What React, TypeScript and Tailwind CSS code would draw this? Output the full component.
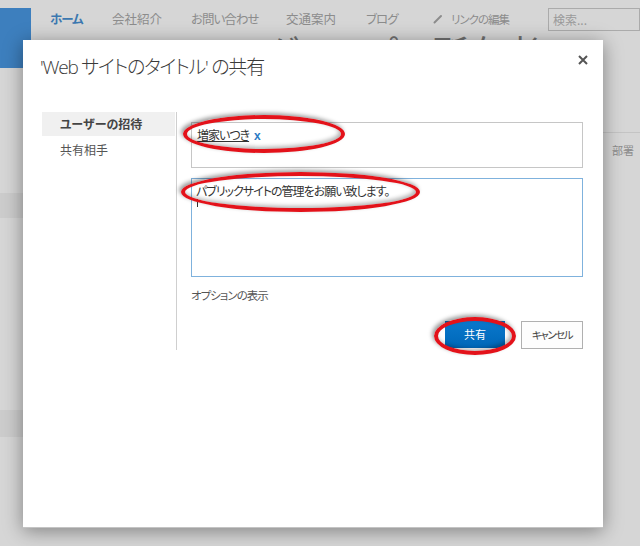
import React from "react";

const jp = "font-['Noto_Sans_CJK_JP',sans-serif] [font-feature-settings:'palt']";

function Ellipse({ cls }: { cls: string }) {
  return (
    <div
      className={`absolute rounded-[50%] border-[4px] border-[#e3121a] shadow-[-2px_-2px_4px_rgba(0,0,0,0.4),inset_-2px_-2px_4px_rgba(0,0,0,0.3)] ${cls}`}
    />
  );
}

export default function App() {
  return (
    <div className={`relative w-[640px] h-[546px] overflow-hidden bg-[#d6d6d6] ${jp}`}>
      {/* background page */}
      <div className="flex items-start">
        <div className="shrink-0 mt-[8px] w-[31px] h-[60px] bg-[#3d7fbe]" />
        <div className="flex flex-col ml-[19px]">
          <div className="flex items-start pt-[11px] text-[12.5px] leading-[16px] tracking-[-1px] text-[#8c8c8c] whitespace-nowrap">
            <div className="shrink-0 w-[62px] font-bold text-[#3c78b0]">ホーム</div>
            <div className="shrink-0 w-[79px] tracking-normal">会社紹介</div>
            <div className="shrink-0 w-[95px]">お問い合わせ</div>
            <div className="shrink-0 w-[80px] tracking-normal">交通案内</div>
            <div className="shrink-0 w-[67px]">ブログ</div>
            <div className="shrink-0 w-[115px] flex items-center gap-[8px] text-[11.5px]">
              <svg width="10" height="10" viewBox="0 0 10 10">
                <path d="M1.5 8.5 L8 2" stroke="#8c8c8c" strokeWidth="2" strokeLinecap="round" />
              </svg>
              <span>リンクの編集</span>
            </div>
            <div className="shrink-0 -mt-[3px] w-[92px] h-[23px] border border-[#ababab] pl-[4px] text-[12px] leading-[21px] tracking-normal text-[#9a9a9a]">
              検索...
            </div>
          </div>
          <div className="mt-[1px] ml-[215px] h-[8px] overflow-hidden">
            <div className="text-[36px] leading-[8px] pt-[15px] text-[#707070] whitespace-nowrap">グループの所有者</div>
          </div>
        </div>
      </div>
      <div className="flex">
        <div className="w-[40px] flex flex-col">
          <div className="h-[125px]" />
          <div className="h-[25px] bg-[#cccccc]" />
          <div className="h-[192px]" />
          <div className="h-[27px] bg-[#cccccc]" />
        </div>
        <div className="flex-1 flex flex-col">
          <div className="h-[64px]" />
          <div className="h-px bg-[#c4c4c4]" />
          <div className="pl-[572px] pt-[10px] text-[11px] leading-[14px] text-[#8c8c8c]">部署</div>
        </div>
      </div>

      {/* dialog */}
      <div className="absolute left-[23px] top-[40px] w-[580px] h-[488px] bg-white border-b border-[#c4c4c4] shadow-[0_3px_18px_rgba(0,0,0,0.4)]">
        <div className="flex items-start justify-between pl-[17px] pr-[15px] pt-[13px]">
          <div className="font-['Open_Sans','Noto_Sans_CJK_JP',sans-serif] font-light text-[19px] leading-[28px] tracking-[-1.2px] text-[#3a3a3a] [font-feature-settings:'palt']">
            'Web サイトのタイトル' の共有
          </div>
          <svg className="mt-[2px]" width="10" height="10" viewBox="0 0 10 10">
            <path d="M1 1 L9 9 M9 1 L1 9" stroke="#555" strokeWidth="2" />
          </svg>
        </div>
        <div className="flex mt-[31px]">
          <div className="ml-[19px] w-[135px] h-[238px] border-r border-[#cfcfcf]">
            <div className="w-[133px] h-[24px] bg-[#f0f0f0] pl-[18px] text-[12px] leading-[24px] font-bold text-[#444]">
              ユーザーの招待
            </div>
            <div className="pl-[18px] pt-[5px] text-[12px] leading-[18px] text-[#555]">共有相手</div>
          </div>
          <div className="ml-[14px] w-[392px] pt-[10px] flex flex-col">
            <div className="h-[46px] border border-[#c6c6c6] pl-[5px] pt-[3px] text-[12px] leading-[17px] tracking-[-1px]">
              <span className="text-[#333] underline">増家いつき</span>
              <span className="ml-[5px] text-[12px] font-bold tracking-normal text-[#2b7bc4] font-['Liberation_Sans',sans-serif]">x</span>
            </div>
            <div className="mt-[10px] h-[99px] border border-[#7fb2dd] pl-[4px] pt-[3px] text-[12px] leading-[17px] tracking-[-1px] text-[#333]">
              <div>パブリックサイトの管理をお願い致します。</div>
              <div className="w-px h-[8px] bg-[#333] ml-[1px]" />
            </div>
            <div className="mt-[10px] text-[11.5px] leading-[16px] tracking-[-1px] text-[#555]">オプションの表示</div>
            <div className="mt-[18px] flex justify-end items-start gap-[16px]">
              <div className="w-[60px] h-[27px] bg-gradient-to-b from-[#0a78cc] to-[#0067b8] text-white text-[11px] leading-[27px] text-center">
                共有
              </div>
              <div className="w-[62px] h-[28px] border border-[#b0b0b0] bg-[#fdfdfd] text-[#444] text-[10.5px] leading-[26px] tracking-[-1.5px] text-center">
                キャンセル
              </div>
            </div>
          </div>
        </div>
      </div>

      {/* annotations */}
      <Ellipse cls="left-[183px] top-[115px] w-[162px] h-[38px]" />
      <Ellipse cls="left-[181px] top-[172px] w-[239px] h-[40px]" />
      <Ellipse cls="left-[434px] top-[317px] w-[82px] h-[38px]" />
    </div>
  );
}
